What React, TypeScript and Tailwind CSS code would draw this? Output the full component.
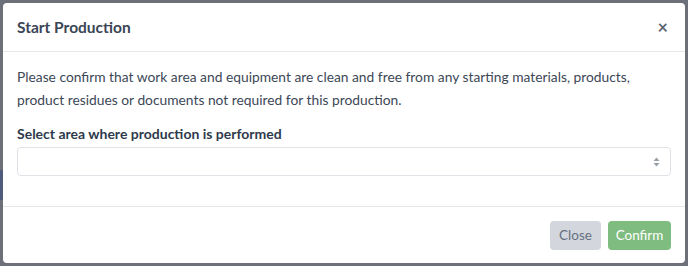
export default function App() {
  return (
    <div className="flex h-[266px] w-[688px] bg-[#6d7079] font-['Lato','Noto_Sans',sans-serif]">
      {/* backdrop edge */}
      <div className="flex w-[3px] flex-col">
        <div className="h-[170px]" />
        <div className="h-[30px] bg-[#4f5b7c]" />
      </div>

      <div className="mt-[3px] flex h-[260px] w-[682px] flex-col rounded-[4px] bg-white">
        <div className="flex h-[49px] items-center justify-between border-b border-[#e5e7eb] pl-[14px] pr-[17px]">
          <h2 className="pt-[1px] text-[15.5px] font-bold text-[#3a4556]">Start Production</h2>
          <button className="text-[18px] font-bold leading-none text-[#5f6672]">×</button>
        </div>

        <div className="flex flex-1 flex-col border-b border-[#e5e7eb] px-[14px] pt-[13px]">
          <p className="text-[13.8px] leading-[23px] text-[#3c4756]">
            Please confirm that work area and equipment are clean and free from any starting materials, products,
            product residues or documents not required for this production.
          </p>
          <label className="mt-[12px] text-[14px] font-bold text-[#2e3a4b]">Select area where production is performed</label>
          <div className="mt-[3px] flex h-[29px] items-center justify-end rounded-[4px] border border-[#dfe2e6] pr-[10px]">
            <svg width="7" height="10" viewBox="0 0 7 10" className="fill-[#9aa0a8]">
              <path d="M3.5 0.5 L6.5 4 H0.5 Z" />
              <path d="M3.5 9.5 L6.5 6 H0.5 Z" />
            </svg>
          </div>
        </div>

        <div className="flex h-[56px] items-center justify-end gap-[7px] px-[14px]">
          <button className="h-[29px] w-[51px] rounded-[4px] bg-[#d3d6dc] text-[13.5px] text-[#667080]">Close</button>
          <button className="h-[29px] w-[63px] rounded-[4px] bg-[#7fbc7f] text-[13.5px] text-white">Confirm</button>
        </div>
      </div>
    </div>
  )
}
